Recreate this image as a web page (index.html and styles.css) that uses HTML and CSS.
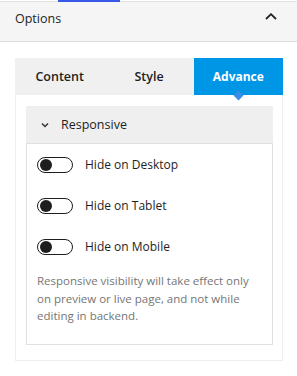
FILE: index.html
```
<!DOCTYPE html>
<html lang="en">
<head>
  <meta charset="UTF-8" />
  <title>Options</title>
  <link rel="stylesheet" href="styles.css">
</head>
<body>
  <div class="topbar"><span class="topbar-active"></span></div>
  <div class="options-head">
    <span>Options</span>
    <svg class="caret" width="12" height="7" viewBox="0 0 12 7"><path d="M1 6 L6 1.2 L11 6" fill="none" stroke="#222" stroke-width="1.8"/></svg>
  </div>

  <div class="options-body">
    <div class="tabs">
      <div class="tab">Content</div>
      <div class="tab">Style</div>
      <div class="tab active">Advance</div>
    </div>
    <div class="panel">
      <div class="card">
        <div class="card-head">
          <svg width="8" height="6" viewBox="0 0 8 6"><path d="M1 1.5 L4 4.5 L7 1.5" fill="none" stroke="#333" stroke-width="1.5"/></svg>
          <span>Responsive</span>
        </div>
        <div class="card-body">
          <label class="row"><span class="toggle"></span>Hide on Desktop</label>
          <label class="row"><span class="toggle"></span>Hide on Tablet</label>
          <label class="row"><span class="toggle"></span>Hide on Mobile</label>
          <p class="note">Responsive visibility will take effect only on preview or live page, and not while editing in backend.</p>
        </div>
      </div>
    </div>
  </div>
</body>
</html>
```
FILE: styles.css
```
body {
  margin: 0;
  font-family: "Open Sans", sans-serif;
  background: #fff;
  color: #1e1e1e;
}
.topbar {
  height: 1px;
  border-bottom: 1px solid #e0e0e0;
  position: relative;
}
.topbar-active {
  position: absolute;
  left: 58px;
  top: 0;
  width: 62px;
  height: 2px;
  background: #3858e9;
}
.options-head {
  height: 40px;
  box-sizing: border-box;
  background: #f5f5f5;
  border-bottom: 1px solid #ddd;
  display: flex;
  align-items: flex-start;
  justify-content: space-between;
  padding: 8px 20px 0 15px;
  font-size: 12.5px;
}
.caret {
  margin-top: 3px;
}
.options-body {
  padding: 16px 14px 0 15px;
}
.tabs {
  display: flex;
  height: 37px;
  background: #f0f0f0;
}
.tab {
  flex: 1;
  display: flex;
  align-items: center;
  justify-content: center;
  font-size: 12.5px;
  font-weight: 600;
  color: #1e1e1e;
}
.tab.active {
  background: #0096e6;
  color: #fff;
  font-weight: 700;
  font-size: 12px;
  position: relative;
}
.tab.active::after {
  content: "";
  position: absolute;
  left: 50%;
  bottom: -4px;
  width: 7px;
  height: 7px;
  margin-left: -3px;
  background: #3a8ee6;
  transform: rotate(45deg);
}
.panel {
  border: 1px solid #eee;
  border-top: none;
  padding: 11px 9px 15px 10px;
}
.card {
  border: 1px solid #e0e0e0;
  border-top: none;
}
.card-head {
  height: 37px;
  background: #efefef;
  display: flex;
  align-items: center;
  gap: 12px;
  padding-left: 15px;
  font-size: 12.5px;
  color: #1e1e1e;
  border-bottom: 1px solid #e0e0e0;
  margin: 0 -1px;
}
.card-body {
  padding: 0 10px 0 10px;
}
.row {
  display: flex;
  align-items: center;
  gap: 12px;
  height: 41px;
  font-size: 12px;
  color: #1e1e1e;
}
.toggle {
  width: 34px;
  height: 14px;
  border: 1.5px solid #1e1e1e;
  border-radius: 9px;
  position: relative;
  box-sizing: content-box;
}
.toggle::before {
  content: "";
  position: absolute;
  left: 2px;
  top: 1px;
  width: 12px;
  height: 12px;
  border-radius: 50%;
  background: #1e1e1e;
}
.note {
  margin: 5px 0 19px;
  font-size: 11.5px;
  line-height: 17.5px;
  color: #757575;
}
```
